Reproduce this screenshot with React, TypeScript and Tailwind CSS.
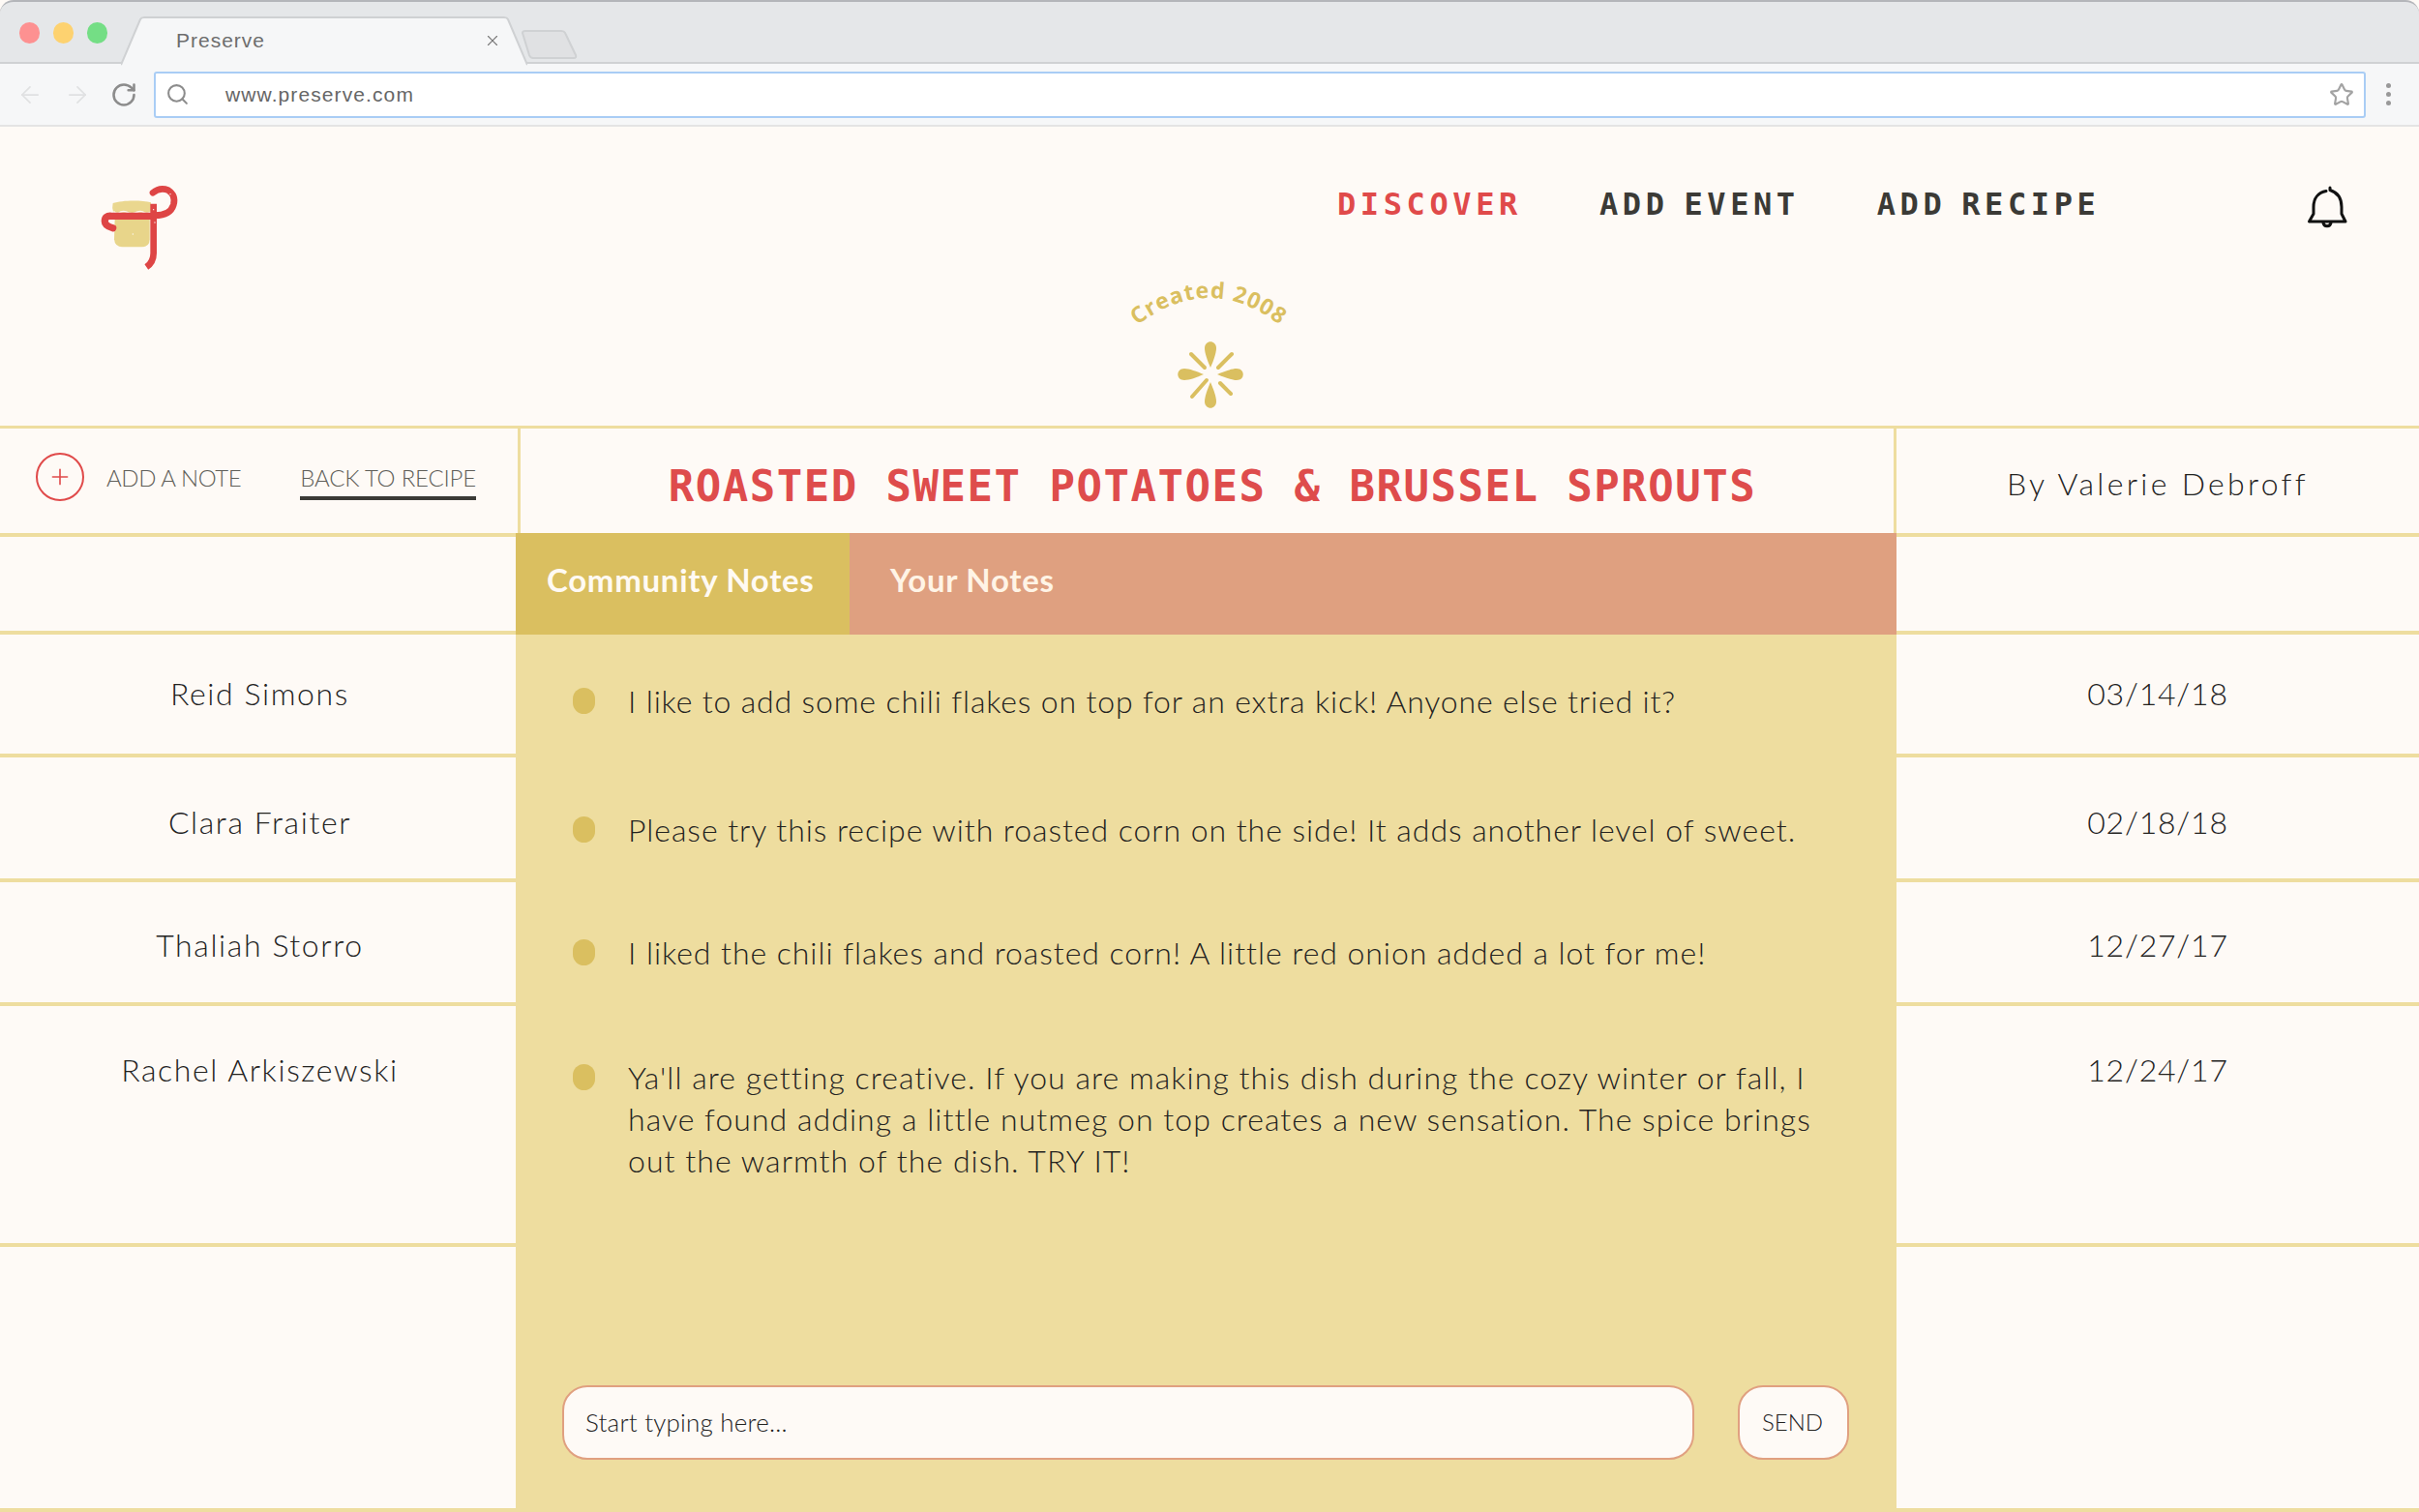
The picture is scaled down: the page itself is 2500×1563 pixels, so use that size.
import { ArrowLeft, ArrowRight, RotateCw, Search, Star, X, Plus } from "lucide-react";

const notes = [
  {
    name: "Reid Simons",
    date: "03/14/18",
    text: ["I like to add some chili flakes on top for an extra kick! Anyone else tried it?"],
    rowClass: "h-[127px]",
    sideClass: "pt-[41px]",
    noteClass: "pt-[47px]",
    textClass: "tracking-[0.85px]",
  },
  {
    name: "Clara Fraiter",
    date: "02/18/18",
    text: ["Please try this recipe with roasted corn on the side! It adds another level of sweet."],
    rowClass: "h-[129px]",
    sideClass: "pt-[47px]",
    noteClass: "pt-[53px]",
    textClass: "tracking-[0.95px]",
  },
  {
    name: "Thaliah Storro",
    date: "12/27/17",
    text: ["I liked the chili flakes and roasted corn! A little red onion added a lot for me!"],
    rowClass: "h-[128px]",
    sideClass: "pt-[45px]",
    noteClass: "pt-[51px]",
    textClass: "tracking-[0.95px]",
  },
  {
    name: "Rachel Arkiszewski",
    date: "12/24/17",
    text: [
      "Ya'll are getting creative. If you are making this dish during the cozy winter or fall, I",
      "have found adding a little nutmeg on top creates a new sensation. The spice brings",
      "out the warmth of the dish. TRY IT!",
    ],
    rowClass: "h-[249px]",
    sideClass: "pt-[46px]",
    noteClass: "pt-[52px]",
    textClass: "tracking-[1.05px]",
  },
];

function BrowserChrome() {
  return (
    <div className="font-['Liberation_Sans',sans-serif]">
      <div className="relative flex h-[66px] items-center rounded-t-[14px] border-t-[2px] border-b-[2px] border-t-[#b4b6ba] border-b-[#cfd1d3] bg-[#e5e7e9] pl-[20px]">
        <div className="flex gap-[14px] pt-[2px]">
          <span className="h-[22px] w-[21px] rounded-full bg-[#fd9191]" />
          <span className="h-[22px] w-[21px] rounded-full bg-[#fdd270]" />
          <span className="h-[22px] w-[21px] rounded-full bg-[#74de85]" />
        </div>
        <div className="absolute top-[15px] left-[125px] h-[51px] w-[420px]">
          <svg className="absolute inset-0" width="420" height="51" viewBox="0 0 420 51">
            <path d="M0 51 L20 3 Q21 1 24 1 H396 Q399 1 400 3 L420 51 Z" fill="#f6f7f8" />
            <path d="M0 50 L20 3 Q21 1 24 1 H396 Q399 1 400 3 L420 50" fill="none" stroke="#cfd1d3" strokeWidth="2" />
          </svg>
          <span className="absolute top-[12px] left-[57px] text-[21px] leading-[26px] tracking-[1px] text-[#6d6d6d]">Preserve</span>
          <X className="absolute top-[16px] left-[375px] text-[#777]" size={18} strokeWidth={1.5} />
        </div>
        <svg className="absolute top-[28px] left-[538px]" width="60" height="32" viewBox="0 0 60 32">
          <path d="M2 4 Q2 2 5 2 H42 Q45 2 46 4 L57 27 Q58 30 55 30 H13 Q10 30 9 27 Z" fill="#e0e1e3" stroke="#cfd1d3" strokeWidth="2" />
        </svg>
      </div>
      <div className="flex h-[65px] items-center border-b-[2px] border-[#e4e4e4] bg-[#f6f7f8]">
        <ArrowLeft className="ml-[17px] text-[#e0e1e2]" size={28} strokeWidth={1.5} />
        <ArrowRight className="ml-[21px] text-[#e0e1e2]" size={28} strokeWidth={1.5} />
        <RotateCw className="ml-[20px] text-[#8c8c8c]" size={28} strokeWidth={2.2} />
        <div className="ml-[17px] flex h-[48px] w-[2286px] items-center rounded-[3px] border-[2px] border-[#a9cdf5] bg-white">
          <Search className="ml-[10px] text-[#8c8c8c]" size={25} strokeWidth={2} />
          <span className="ml-[37px] text-[21px] tracking-[1.1px] text-[#666]">www.preserve.com</span>
          <Star className="mr-[10px] ml-auto text-[#a3a3a3]" size={26} strokeWidth={2} />
        </div>
        <div className="ml-[21px] flex flex-col gap-[4px]">
          <span className="h-[5px] w-[5px] rounded-full bg-[#999]" />
          <span className="h-[5px] w-[5px] rounded-full bg-[#999]" />
          <span className="h-[5px] w-[5px] rounded-full bg-[#999]" />
        </div>
      </div>
    </div>
  );
}

function Logo() {
  return (
    <svg width="130" height="120" viewBox="0 0 390 360" className="shrink-0">
      <path d="M110 120 C140 110 200 110 228 118 L228 150 H112 Q106 135 110 120 Z" fill="#ead78f" />
      <path d="M112 146 Q122 156 133 148 Q145 142 158 150 Q172 156 185 148 Q197 142 208 150 Q218 154 228 148" fill="none" stroke="#fefaf6" strokeWidth="5" />
      <path d="M116 168 H224 V232 Q224 256 200 256 H140 Q116 256 114 232 Z" fill="#e8d58a" />
      <path d="M232 160 H105 Q85 158 85 176 Q85 190 110 197" fill="none" stroke="#de4545" strokeWidth="22" strokeLinecap="round" />
      <path d="M236 122 V275 Q236 303 214 318" fill="none" stroke="#de4545" strokeWidth="20" />
      <path d="M234 88 Q255 70 282 80 Q306 96 298 125 Q288 158 240 158" fill="none" stroke="#de4545" strokeWidth="20" strokeLinecap="round" />
      <g fill="#fefaf6">
        <circle cx="236" cy="140" r="2" />
        <circle cx="288" cy="92" r="2" />
        <circle cx="240" cy="180" r="2" />
        <circle cx="172" cy="216" r="2" />
      </g>
    </svg>
  );
}

function Bell() {
  return (
    <svg width="44" height="48" viewBox="0 0 44 48" fill="none" stroke="#111" strokeWidth="3" strokeLinecap="round" strokeLinejoin="round">
      <path d="M21 7.5 C13 9 8 15 8 24 V31 L3.5 39 H41 L37 31 V24 C37 15 33 9 25 6.5 V4" />
      <path d="M18 40 C18.5 45 25.5 45 26 40" />
    </svg>
  );
}

const petal = "M0 -7 C-3 -14 -6 -22 -6 -27 C-6 -36 6 -36 6 -27 C6 -22 3 -14 0 -7 Z";

function Badge() {
  return (
    <svg width="200" height="155" viewBox="0 0 200 155" className="mx-auto block">
      <path id="created-arc" d="M8 74 Q100 -12 190 74" fill="none" />
      <text fill="#dabf60" fontSize="23" fontWeight="700" letterSpacing="1" textAnchor="middle" fontFamily="'Open Sans', sans-serif">
        <textPath href="#created-arc" startOffset="50%">Created 2008</textPath>
      </text>
      <g transform="translate(101 110)" fill="#dabf60">
        <path d={petal} />
        <path d={petal} transform="rotate(90)" />
        <path d={petal} transform="translate(0 1) rotate(180)" />
        <path d={petal} transform="rotate(270)" />
        <g stroke="#dabf60" strokeWidth="4" strokeLinecap="round">
          <path d="M8 -7 L22 -21" />
          <path d="M-6 -7 L-20 -21" />
          <path d="M10 9 L21 20" />
          <path d="M-4 6 L-19 23" />
        </g>
      </g>
    </svg>
  );
}

export default function App() {
  return (
    <div className="h-[1563px] w-[2500px] overflow-hidden bg-[#fefaf6] font-[Lato,sans-serif] text-[#24231f]">
      <BrowserChrome />

      <header className="h-[309px]">
        <div className="flex h-[120px] items-start pt-[39px] pr-[73px] pl-[80px]">
          <Logo />
          <nav className="ml-[1172px] flex gap-[80px] pt-[20px] font-['DejaVu_Sans_Mono',monospace] text-[32px] leading-[42px] font-bold tracking-[4.6px] whitespace-nowrap text-[#3b3a36] [word-spacing:-8px]">
            <span className="text-[#e04a4a]">DISCOVER</span>
            <span>ADD EVENT</span>
            <span>ADD RECIPE</span>
          </nav>
          <div className="ml-auto pt-[20px]">
            <Bell />
          </div>
        </div>
        <div className="pt-[26px]">
          <Badge />
        </div>
      </header>

      <div className="grid grid-cols-[533px_1427px_540px] border-t-[3px] border-[#eedd9f]">
        <div className="flex h-[108px] items-start pt-[25px] pl-[37px]">
          <span className="flex h-[50px] w-[50px] items-center justify-center rounded-full border-[2px] border-[#e04a4a] text-[#e04a4a]">
            <Plus size={26} strokeWidth={1.5} />
          </span>
          <span className="ml-[23px] pt-[10px] text-[24px] leading-[32px] font-light tracking-[-0.4px] text-[#5f5e58]">ADD A NOTE</span>
          <span className="ml-[61px] border-b-[4px] border-[#3b3a36] pt-[10px] pb-[3px] text-[24px] leading-[32px] font-light tracking-[-0.2px] text-[#5f5e58]">BACK TO RECIPE</span>
        </div>
        <div className="ml-[2px] flex h-[108px] items-center justify-center border-x-[3px] border-[#eedd9f] pt-[12px] pl-[11px] font-['DejaVu_Sans_Mono',monospace] text-[44px] font-bold tracking-[1.5px] whitespace-pre text-[#de4c4c] [word-spacing:1px]">
          ROASTED SWEET POTATOES &amp; BRUSSEL SPROUTS
        </div>
        <div className="flex h-[108px] items-center justify-center pt-[6px] text-[32px] font-light tracking-[3.3px]">By Valerie Debroff</div>

        <div className="h-[105px] border-y-[4px] border-[#eedd9f]" />
        <div className="flex h-[105px] bg-[#dfa080] pb-[9px] text-[33px] leading-[40px] font-bold tracking-[0.7px] text-[#fffaf3]">
          <span className="-mb-[9px] flex w-[345px] items-center bg-[#dabf60] pb-[9px] pl-[32px]">Community Notes</span>
          <span className="flex items-center pl-[42px] text-[#fff4e6]">Your Notes</span>
        </div>
        <div className="h-[105px] border-y-[4px] border-[#eedd9f]" />

        {notes.map((note) => (
          <div key={note.name} className="contents">
            <div className={`${note.rowClass} ${note.sideClass} border-b-[4px] border-[#eedd9f] pl-[4px] text-center text-[32px] leading-[40px] font-light tracking-[1.6px]`}>
              {note.name}
            </div>
            <div className={`${note.rowClass} ${note.noteClass} flex bg-[#eedd9f] pl-[59px]`}>
              <span className="mt-[8px] h-[27px] w-[23px] shrink-0 rounded-full bg-[#dabf60]" />
              <p className={`${note.textClass} ml-[34px] text-[32px] leading-[43px] font-light whitespace-nowrap`}>
                {note.text.map((line) => (
                  <span key={line} className="block">{line}</span>
                ))}
              </p>
            </div>
            <div className={`${note.rowClass} ${note.sideClass} border-b-[4px] border-[#eedd9f] text-center text-[32px] leading-[40px] font-light tracking-[0.8px]`}>
              {note.date}
            </div>
          </div>
        ))}

        <div className="h-[274px] border-b-[4px] border-[#eedd9f]" />
        <div className="flex h-[274px] items-start gap-[45px] bg-[#eedd9f] pt-[143px] pl-[48px]">
          <input
            placeholder="Start typing here..."
            className="h-[77px] w-[1170px] rounded-[26px] border-[2px] border-[#e0a080] bg-[#fefaf6] pb-[2px] pl-[22px] text-[26px] font-light tracking-[0.2px] placeholder:text-[#24231f]"
          />
          <button type="button" className="h-[77px] w-[115px] rounded-[26px] border-[2px] border-[#e0a080] bg-[#fefaf6] pr-[2px] pb-[2px] text-[24px] font-light text-[#24231f]">
            SEND
          </button>
        </div>
        <div className="h-[274px] border-b-[4px] border-[#eedd9f]" />
      </div>
    </div>
  );
}
